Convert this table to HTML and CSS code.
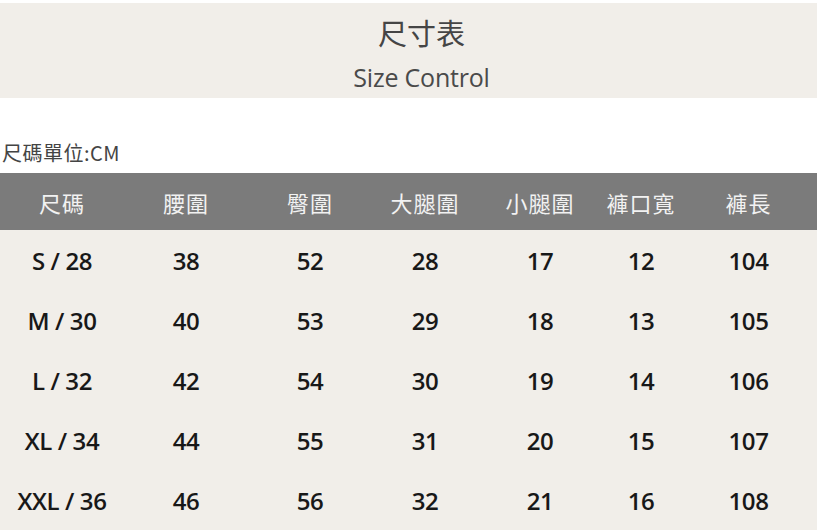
FILE: index.html
```html
<!DOCTYPE html>
<html lang="zh-Hant">
<head>
<meta charset="utf-8">
<link rel="stylesheet" href="styles.css">
</head>
<body>
<div class="page">
  <header class="banner">
    <div class="title">尺寸表</div>
    <div class="subtitle">Size Control</div>
  </header>
  <div class="unit">尺碼單位:CM</div>
  <div class="table">
    <div class="row head">
      <div>尺碼</div><div>腰圍</div><div>臀圍</div><div>大腿圍</div><div>小腿圍</div><div>褲口寬</div><div>褲長</div>
    </div>
    <div class="row">
      <div>S / 28</div><div>38</div><div>52</div><div>28</div><div>17</div><div>12</div><div>104</div>
    </div>
    <div class="row">
      <div>M / 30</div><div>40</div><div>53</div><div>29</div><div>18</div><div>13</div><div>105</div>
    </div>
    <div class="row">
      <div>L / 32</div><div>42</div><div>54</div><div>30</div><div>19</div><div>14</div><div>106</div>
    </div>
    <div class="row">
      <div>XL / 34</div><div>44</div><div>55</div><div>31</div><div>20</div><div>15</div><div>107</div>
    </div>
    <div class="row">
      <div>XXL / 36</div><div>46</div><div>56</div><div>32</div><div>21</div><div>16</div><div>108</div>
    </div>
  </div>
</div>
</body>
</html>
```
FILE: styles.css
```css
html, body {
  margin: 0;
  padding: 0;
  background: #ffffff;
}
.page {
  width: 817px;
  padding-top: 3px;
  font-family: "Open Sans", "Noto Sans CJK TC", sans-serif;
}
.banner {
  background: #f1eee9;
  height: 95px;
  padding-left: 26px;
  display: flex;
  flex-direction: column;
  align-items: center;
}
.title {
  font-family: "Noto Sans CJK TC", sans-serif;
  font-size: 29px;
  color: #454545;
  line-height: 34px;
  margin-top: 12px;
}
.subtitle {
  font-size: 25px;
  color: #4a4a4a;
  line-height: 32px;
  margin-top: 12px;
  letter-spacing: -0.2px;
}
.unit {
  font-family: "Noto Sans CJK TC", sans-serif;
  font-size: 20px;
  color: #444;
  margin-top: 41px;
  padding-left: 2px;
  line-height: 28px;
  letter-spacing: 0.5px;
}
.table {
  margin-top: 6px;
  background: #f1eee9;
}
.row {
  display: grid;
  grid-template-columns: 124px 124px 124px 106px 124px 78px 137px;
  height: 60px;
  align-items: center;
  justify-items: center;
  font-size: 24px;
  font-weight: 600;
  letter-spacing: -0.4px;
  color: #181818;
}
.row.head {
  height: 57px;
  background: #7b7b7b;
  color: #f2f2f2;
  font-family: "Noto Sans CJK TC", sans-serif;
  font-weight: 400;
  font-size: 22px;
  letter-spacing: 1px;
}
```
